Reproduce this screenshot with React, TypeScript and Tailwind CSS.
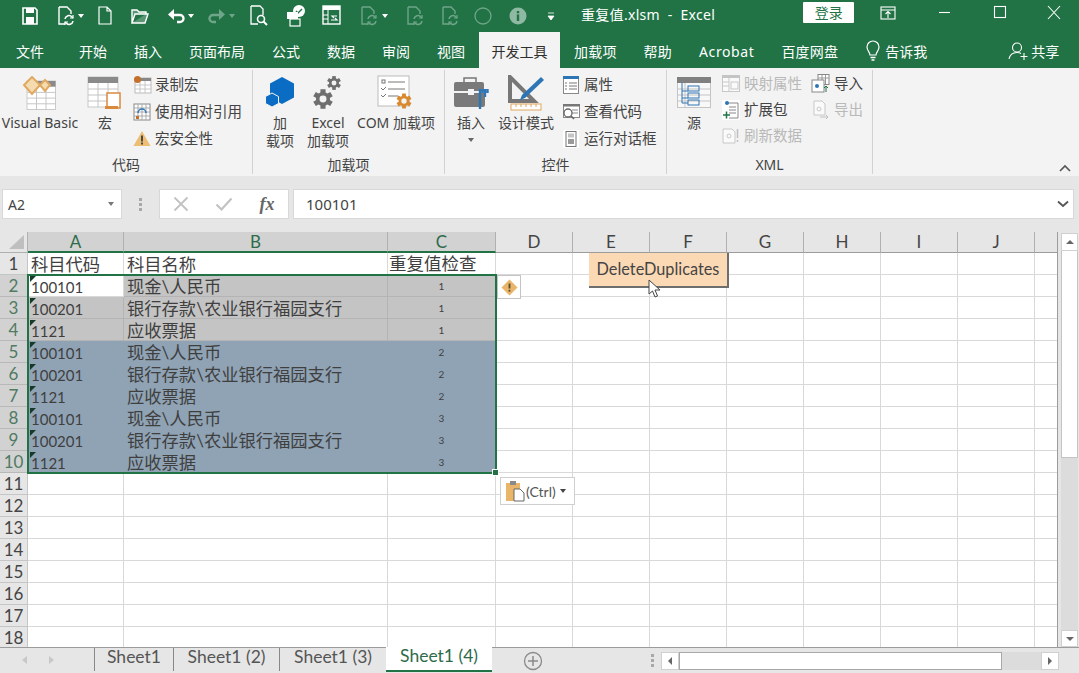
import React from "react";

const W = "#ffffff";
const Faded = "#6fa588";

function Caret({ color = W }: { color?: string }) {
  return (
    <svg width="8" height="6" viewBox="0 0 8 6" className="shrink-0">
      <path d="M1 1h6L4 5z" fill={color} />
    </svg>
  );
}

function Qat({ w, children, h = 24 }: { w: number; h?: number; children: React.ReactNode }) {
  return (
    <svg width={w} height={h} viewBox={`0 0 ${w} ${h}`} className="shrink-0" fill="none">
      {children}
    </svg>
  );
}

function Refresh({ x, y, c }: { x: number; y: number; c: string }) {
  return (
    <g transform={`translate(${x} ${y})`} stroke={c} strokeWidth="1.6" fill="none">
      <path d="M1 4a4 4 0 0 1 7-2l1 1M9 6a4 4 0 0 1-7 2L1 7" />
      <path d="M9 0v3H6M1 10V7h3" strokeWidth="1.2" />
    </g>
  );
}

function DocRefresh({ c }: { c: string }) {
  return (
    <Qat w={20}>
      <path d="M3 3h8l4 4v3M3 3v17h6" stroke={c} strokeWidth="1.4" />
      <Refresh x={8} y={11} c={c} />
    </Qat>
  );
}

function TitleBar() {
  return (
    <div className="h-[32px] flex items-center bg-[#217346] text-white relative">
      <div className="flex items-center pl-[21px] h-full">
        <Qat w={18}>
          <path d="M2 4h12l2 2v14H2z" stroke={W} strokeWidth="1.6" />
          <rect x="5" y="4" width="8" height="5" fill={W} />
          <rect x="5" y="13" width="8" height="7" fill={W} />
        </Qat>
        <div className="w-[17px]" />
        <DocRefresh c={W} />
        <div className="ml-[1px]"><Caret /></div>
        <div className="w-[12px]" />
        <Qat w={16}>
          <path d="M2 3h8l4 4v13H2zM10 3v4h4" stroke={W} strokeWidth="1.2" />
        </Qat>
        <div className="w-[17px]" />
        <Qat w={19}>
          <path d="M2 19V6h5l2 2h7v2M2 19h13l3-9H5z" stroke={W} strokeWidth="1.4" fill={W} fillOpacity="0.25" />
        </Qat>
        <div className="w-[18px]" />
        <Qat w={18}>
          <path d="M5 11h8a3.5 3.5 0 0 1 0 7h-3" stroke={W} strokeWidth="2.4" />
          <path d="M7 5v11L1 10.500z" fill={W} />
        </Qat>
        <div className="ml-[2px]"><Caret /></div>
        <div className="w-[13px]" />
        <Qat w={18}>
          <path d="M13 11H5a3.500 3.500 0 0 0 0 7h3" stroke={Faded} strokeWidth="2.4" />
          <path d="M11 5v11l6-5.500z" fill={Faded} />
        </Qat>
        <div className="ml-[2px]"><Caret color={Faded} /></div>
        <div className="w-[13px]" />
        <Qat w={20}>
          <path d="M2 2h9l3 3v6M2 2v18h7" stroke={W} strokeWidth="1.3" />
          <circle cx="12" cy="15" r="3.500" stroke={W} strokeWidth="1.6" />
          <path d="M14.500 17.500 18 21" stroke={W} strokeWidth="2" />
        </Qat>
        <div className="w-[16px]" />
        <Qat w={22}>
          <circle cx="14" cy="7" r="6" fill={W} />
          <path d="m11 7 2 2 4-4" stroke="#217346" strokeWidth="1.400" />
          <rect x="2" y="8" width="11" height="7" fill={W} />
          <rect x="5" y="15" width="10" height="7" fill="none" stroke={W} strokeWidth="1.200" />
        </Qat>
        <div className="w-[14px]" />
        <Qat w={20}>
          <rect x="2" y="2" width="17" height="18" stroke={W} strokeWidth="1.4" />
          <rect x="2" y="2" width="17" height="4" fill={W} />
          <path d="M7 6v14M2 11h5M2 15h5" stroke={W} />
          <path d="M10 16h6l-2-2M16 12h-5l2 2" stroke={W} strokeWidth="1.200" />
        </Qat>
        <div className="w-[18px]" />
        <DocRefresh c={Faded} />
        <div className="ml-[2px]"><Caret /></div>
        <div className="w-[16px]" />
        <DocRefresh c={Faded} />
        <div className="w-[15px]" />
        <DocRefresh c={Faded} />
        <div className="w-[13px]" />
        <Qat w={20}>
          <circle cx="10" cy="12" r="8" stroke={Faded} strokeWidth="1.300" />
        </Qat>
        <div className="w-[15px]" />
        <Qat w={20}>
          <circle cx="10" cy="12" r="8.500" fill="#8fb9a3" />
          <rect x="8.800" y="10.500" width="2.400" height="6.500" fill="#217346" />
          <rect x="8.800" y="7" width="2.400" height="2.300" fill="#217346" />
        </Qat>
        <div className="w-[18px]" />
        <Qat w={10}>
          <path d="M2 9h6M2 12h6l-3 4z" fill={W} stroke={W} strokeWidth="0.800" />
        </Qat>
      </div>
      <div className="ml-[25px] text-[14px] whitespace-pre tracking-[0.3px] -mt-[4px]">重复值.xlsm  -  Excel</div>
      <div className="ml-[88px] w-[51px] h-[21px] -mt-[8px] bg-white text-[#217346] text-[14px] flex items-center justify-center rounded-[1px]">
        登录
      </div>
      <div className="ml-[26px] -mt-[6px]">
        <Qat w={16}>
          <rect x="1" y="6" width="14" height="12" stroke={W} strokeWidth="1.100" />
          <path d="M1 9h14M8 17v-6M5.500 13 8 10.500l2.500 2.500" stroke={W} strokeWidth="1.100" />
        </Qat>
      </div>
      <div className="ml-[42px] -mt-[6px]">
        <Qat w={14}><path d="M1 11.500h11" stroke={W} strokeWidth="1.100" /></Qat>
      </div>
      <div className="ml-[41px] -mt-[6px]">
        <Qat w={14}><rect x="1.500" y="5.500" width="11" height="11" stroke={W} strokeWidth="1.100" /></Qat>
      </div>
      <div className="ml-[40px] -mt-[6px]">
        <Qat w={14}><path d="m1 5 12 13M13 5 1 18" stroke={W} strokeWidth="1.100" /></Qat>
      </div>
    </div>
  );
}

function TabsRow() {
  const tabs = ["开始", "插入", "页面布局", "公式", "数据", "审阅", "视图"];
  const after = ["加载项", "帮助", "Acrobat", "百度网盘"];
  return (
    <div className="h-[36px] flex items-end bg-[#217346] text-white text-[14px] pl-[16px]">
      <div className="h-[36px] flex items-center mr-[35px] pt-[2px]">文件</div>
      {tabs.map((t) => (
        <div key={t} className="h-[36px] flex items-center mr-[27px] pt-[2px]">{t}</div>
      ))}
      <div className="h-[36px] -ml-[13px] px-[11px] bg-[#f3f3f3] text-[#2f2f2f] flex items-center pt-[2px] w-[81px] whitespace-nowrap justify-center">
        开发工具
      </div>
      <div className="ml-[14px] flex">
        {after.map((t) => (
          <div
            key={t}
            className={`h-[36px] flex items-center mr-[27px] pt-[2px] ${t === "Acrobat" ? "tracking-[0.6px]" : "tracking-[0.2px]"}`}
          >
            {t}
          </div>
        ))}
      </div>
      <div className="h-[36px] flex items-center pt-[2px]">
        <svg width="16" height="22" viewBox="0 0 16 22" fill="none">
          <path d="M5 15c0-3-3-4-3-8a6 6 0 0 1 12 0c0 4-3 5-3 8z" stroke={W} strokeWidth="1.200" />
          <path d="M5.500 17.500h5M6.500 20h3" stroke={W} strokeWidth="1.400" />
        </svg>
      </div>
      <div className="h-[36px] flex items-center ml-[4px] pt-[2px]">告诉我</div>
      <div className="h-[36px] flex items-center ml-[81px] pt-[2px]">
        <svg width="22" height="20" viewBox="0 0 22 20" fill="none">
          <circle cx="9" cy="6.500" r="4.500" stroke={W} strokeWidth="1.100" />
          <path d="M1 18c1-5 4-6.500 8-6.500 1.500 0 3 .3 4 1M16 12v7M12.500 15.500h7" stroke={W} strokeWidth="1.100" />
        </svg>
      </div>
      <div className="h-[36px] flex items-center ml-[1px] pt-[2px]">共享</div>
    </div>
  );
}

function Big({ w, icon, label, caret }: { w: number; icon: React.ReactNode; label: React.ReactNode; caret?: boolean }) {
  return (
    <div style={{ width: w }} className="shrink-0 flex flex-col items-center text-[14px] leading-[18px] text-[#444]">
      <div className="h-[42px] flex items-center justify-center">{icon}</div>
      <div className="text-center whitespace-nowrap">{label}</div>
      {caret && <div className="mt-[5px]"><Caret color="#666" /></div>}
    </div>
  );
}

function Small({ icon, label, dim }: { icon: React.ReactNode; label: string; dim?: boolean }) {
  return (
    <div className={`h-[27px] flex items-center gap-[3px] text-[14.500px] whitespace-nowrap ${dim ? "text-[#b9b9b9]" : "text-[#444]"}`}>
      <div className="w-[20px] h-[20px] flex items-center justify-center shrink-0">{icon}</div>
      <span>{label}</span>
    </div>
  );
}

function Group({ w, label, children, cls }: { w: number; label: string; children: React.ReactNode; cls?: string }) {
  return (
    <div style={{ width: w }} className="shrink-0 h-[104px] mt-[2px] border-r border-[#d2d2d2] flex flex-col">
      <div className={`h-[86px] pt-[2px] flex ${cls ?? ""}`}>{children}</div>
      <div className="text-center text-[14px] text-[#444] leading-[18px]">{label}</div>
    </div>
  );
}

const Sheet = ({ s = 1 }: { s?: number }) => (
  <g transform={`scale(${s})`}>
    <rect x="0" y="0" width="30" height="30" fill="#fff" stroke="#c8c8c8" />
    <rect x="0" y="0" width="30" height="6" fill="#8a8a8a" />
    <path d="M0 12h30M0 18h30M0 24h30M10 6v24M20 6v24" stroke="#c4c4c4" />
  </g>
);

function Gear({ x, y, r, c }: { x: number; y: number; r: number; c: string }) {
  const teeth = [0, 60, 120];
  return (
    <g transform={`translate(${x} ${y})`}>
      {teeth.map((a) => (
        <rect key={a} x={-r * 0.3} y={-r * 1.15} width={r * 0.6} height={r * 2.3} fill={c} transform={`rotate(${a})`} />
      ))}
      <circle r={r * 0.62} fill="#f3f3f3" stroke={c} strokeWidth={r * 0.42} />
    </g>
  );
}

function Ribbon() {
  return (
    <div className="h-[108px] bg-[#f3f3f3] flex relative">
      <Group w={253} label="代码">
        <Big
          w={80}
          label="Visual Basic"
          icon={
            <svg width="36" height="34" viewBox="0 0 36 34">
              <g transform="translate(5 5)"><Sheet s={0.95} /></g>
              <path d="M10 1 18 9l-8 9-8-9z" fill="#f4dcb0" stroke="#e0a860" strokeWidth="2" />
              <path d="M23 4l5 5-5 6-5-6z" fill="#f4dcb0" stroke="#e0a860" strokeWidth="2" />
            </svg>
          }
        />
        <Big
          w={50}
          label="宏"
          icon={
            <svg width="36" height="36" viewBox="0 0 36 36">
              <g transform="translate(1 2)"><Sheet /></g>
              <path d="M20 18h13v15H20z" fill="#fff" stroke="#d98a3c" strokeWidth="1.500" />
              <path d="M18 31h13v3H18z" fill="#d98a3c" />
            </svg>
          }
        />
        <div className="ml-[2px] flex flex-col -mt-[1px]">
          <Small
            label="录制宏"
            icon={
              <svg width="19" height="19" viewBox="0 0 19 19">
                <rect x="2" y="3" width="16" height="15" fill="#fff" stroke="#bbb" />
                <rect x="2" y="3" width="16" height="3" fill="#888" />
                <path d="M2 10h16M2 14h16M7 6v12M12 6v12" stroke="#c8c8c8" />
                <circle cx="4.500" cy="4.500" r="3.500" fill="#c5702a" />
              </svg>
            }
          />
          <Small
            label="使用相对引用"
            icon={
              <svg width="18" height="18" viewBox="0 0 18 18">
                <rect x="1" y="1" width="16" height="16" fill="#fff" stroke="#888" />
                <path d="M1 5h16M1 9h16M1 13h16M5 1v16M9 1v16M13 1v16" stroke="#aaa" />
                <path d="M5 10a4 4 0 0 1 8 0" stroke="#2e75b6" strokeWidth="1.500" fill="none" />
                <rect x="3" y="13" width="3" height="3" fill="#c5702a" />
              </svg>
            }
          />
          <Small
            label="宏安全性"
            icon={
              <svg width="18" height="17" viewBox="0 0 18 17">
                <path d="M9 1 17.500 16H.5z" fill="#eebd74" />
                <rect x="8" y="5.500" width="2" height="6" fill="#4a4a4a" />
                <rect x="8" y="12.500" width="2" height="2" fill="#4a4a4a" />
              </svg>
            }
          />
        </div>
      </Group>
      <Group w={192} label="加载项" cls="pl-[4px]">
        <Big
          w={46}
          label={<>加<br />载项</>}
          icon={
            <svg width="32" height="34" viewBox="0 0 32 34">
              <path d="M18 1l12 6.500v14L18 28 6 21.500v-14z" fill="#0b6cc4" />
              <path d="M8 17l6.500 3.500v7L8 31l-6.500-3.500v-7z" fill="#0b6cc4" stroke="#f3f3f3" />
            </svg>
          }
        />
        <Big
          w={50}
          label={<>Excel<br />加载项</>}
          icon={
            <svg width="32" height="36" viewBox="0 0 32 36">
              <Gear x={22} y={8} r={6} c="#6f6f6f" />
              <Gear x={11} y={24} r={8.500} c="#6f6f6f" />
            </svg>
          }
        />
        <Big
          w={86}
          label="COM 加载项"
          icon={
            <svg width="38" height="36" viewBox="0 0 38 36">
              <rect x="1" y="1" width="31" height="30" fill="#fff" stroke="#bbb" />
              <path d="M11 7h17M11 14h17M11 21h10" stroke="#777" />
              <rect x="5" y="5" width="3" height="3" fill="none" stroke="#777" />
              <path d="m4 13 2 2 3-3M4 20l2 2 3-3" stroke="#777" fill="none" />
              <Gear x={27} y={26} r={6.500} c="#d98a2e" />
            </svg>
          }
        />
      </Group>
      <Group w={222} label="控件" cls="pl-[3px]">
        <Big
          w={46}
          caret
          label="插入"
          icon={
            <svg width="36" height="36" viewBox="0 0 36 36">
              <path d="M11 7V3h12v4" fill="none" stroke="#777" strokeWidth="1.500" />
              <path d="M1 9a2 2 0 0 1 2-2h26a2 2 0 0 1 2 2v7H1zM1 18h31v12a2 2 0 0 1-2 2H3a2 2 0 0 1-2-2z" fill="#7a7a7a" />
              <rect x="15" y="14" width="6" height="6" fill="#f3f3f3" />
              <path d="M27 14v20M32 14v8M34.500 14v4M29.500 14v4" stroke="#2e75b6" strokeWidth="2.400" fill="none" />
            </svg>
          }
        />
        <Big
          w={64}
          label="设计模式"
          icon={
            <svg width="36" height="36" viewBox="0 0 36 36">
              <path d="M2 2v24h24z" fill="none" stroke="#777" strokeWidth="4" />
              <path d="M33 2l3 3-19 18-5 2 2-5z" fill="#2e75b6" />
              <rect x="3" y="29" width="30" height="6" fill="#fff" stroke="#e0a860" />
              <path d="M8 29v3M13 29v3M18 29v3M23 29v3M28 29v3" stroke="#e0a860" />
            </svg>
          }
        />
        <div className="ml-[3px] flex flex-col -mt-[1px]">
          <Small
            label="属性"
            icon={
              <svg width="16" height="18" viewBox="0 0 16 18">
                <rect x=".5" y=".5" width="15" height="17" fill="#fff" stroke="#888" />
                <rect x="0" y="0" width="16" height="3" fill="#2e75b6" />
                <path d="M2 7h2M6 7h8M2 10h2M6 10h8M2 13h2M6 13h8" stroke="#777" />
              </svg>
            }
          />
          <Small
            label="查看代码"
            icon={
              <svg width="19" height="18" viewBox="0 0 19 18">
                <rect x="1.500" y="1.500" width="16" height="13" fill="#fff" stroke="#888" />
                <rect x="1" y="1" width="17" height="2.500" fill="#777" />
                <path d="M10 7h6M10 10h6" stroke="#888" />
                <circle cx="6" cy="10" r="4" fill="#fff" stroke="#666" strokeWidth="1.300" />
                <path d="m9 13 3 3" stroke="#666" strokeWidth="1.600" />
              </svg>
            }
          />
          <Small
            label="运行对话框"
            icon={
              <svg width="16" height="18" viewBox="0 0 16 18">
                <rect x="0" y="0" width="16" height="18" fill="#fff" />
                <rect x="3" y="1.500" width="10" height="15" fill="#fff" stroke="#777" />
                <rect x="5" y="3.500" width="6" height="4" fill="#c4c4c4" />
                <rect x="5" y="9" width="6" height="5" fill="#9a9a9a" />
              </svg>
            }
          />
        </div>
      </Group>
      <Group w={206} label="XML" cls="pl-[2px]">
        <Big
          w={50}
          label="源"
          icon={
            <svg width="34" height="32" viewBox="0 0 34 32">
              <rect x=".5" y=".5" width="33" height="30" fill="#f8f8f8" stroke="#c4c4c4" />
              <rect x="0" y="0" width="34" height="6" fill="#808080" />
              <path d="M0 12h34M0 18h34M0 24h34M8 6v24" stroke="#c4c4c4" />
              <path d="M5 6v20h6M5 14h6M5 21h6" stroke="#2e75b6" fill="none" />
              <rect x="11" y="9" width="11" height="5" fill="none" stroke="#2e75b6" />
              <rect x="11" y="16" width="11" height="5" fill="none" stroke="#2e75b6" />
              <rect x="11" y="23" width="11" height="5" fill="none" stroke="#2e75b6" />
            </svg>
          }
        />
        <div className="ml-[2px] w-[90px] flex flex-col -mt-[2px]">
          <Small
            dim
            label="映射属性"
            icon={
              <svg width="18" height="17" viewBox="0 0 18 17">
                <rect x=".5" y=".5" width="17" height="16" fill="#fafafa" stroke="#c8c8c8" />
                <rect x="0" y="0" width="18" height="3" fill="#c4c4c4" />
                <path d="M0 7h7M0 11h7M7 3v14" stroke="#c8c8c8" />
                <rect x="9" y="7" width="7" height="7" fill="none" stroke="#c8c8c8" />
              </svg>
            }
          />
          <div className="-mt-[1px]">
            <Small
              label="扩展包"
              icon={
                <svg width="18" height="20" viewBox="0 0 18 20">
                  <rect x="0" y="0" width="18" height="20" fill="#fff" />
                  <path d="M4 3h12v15H7" fill="none" stroke="#888" />
                  <path d="M7 7h7M7 10h7M7 13h7" stroke="#888" />
                  <circle cx="5" cy="3" r="2" fill="#2e75b6" />
                  <path d="M1 15h7M4.500 11.500v7" stroke="#217346" strokeWidth="1.500" />
                </svg>
              }
            />
          </div>
          <div className="-mt-[1px]">
            <Small
              dim
              label="刷新数据"
              icon={
                <svg width="18" height="19" viewBox="0 0 18 19">
                  <path d="M1 3h9l3 3v11H1z" fill="#fafafa" stroke="#c8c8c8" />
                  <circle cx="7" cy="10" r="2" fill="none" stroke="#c8c8c8" />
                  <path d="M15.500 3v9M15.500 14v2" stroke="#c0c0c0" strokeWidth="1.500" />
                </svg>
              }
            />
          </div>
        </div>
        <div className="flex flex-col -mt-[2px]">
          <Small
            label="导入"
            icon={
              <svg width="20" height="20" viewBox="0 0 20 20">
                <rect x="7" y="0.500" width="11" height="10" fill="#fff" stroke="#888" />
                <path d="M7 4h11M11 1v9M14.500 1v9" stroke="#999" />
                <rect x="1" y="6" width="12" height="12" fill="#fff" stroke="#888" />
                <circle cx="6" cy="12" r="2" fill="#2e75b6" />
                <path d="M15 18v-6l-2 2M15 12l2 2" stroke="#217346" fill="none" />
              </svg>
            }
          />
          <div className="-mt-[1px]">
            <Small
              dim
              label="导出"
              icon={
                <svg width="18" height="20" viewBox="0 0 18 20">
                  <path d="M2 1h8l3 3v11H2z" fill="#fafafa" stroke="#c8c8c8" />
                  <circle cx="7" cy="9" r="2" fill="none" stroke="#c8c8c8" />
                  <path d="M8 17h8l-2-2M16 17l-2 2" stroke="#c0c0c0" fill="none" />
                </svg>
              }
            />
          </div>
        </div>
      </Group>
      <div className="absolute right-[8px] bottom-[4px]">
        <svg width="12" height="8" viewBox="0 0 12 8" fill="none">
          <path d="m1 7 5-5 5 5" stroke="#555" strokeWidth="1.600" />
        </svg>
      </div>
    </div>
  );
}

function FormulaBar() {
  return (
    <div className="h-[56px] bg-[#e6e6e6] pt-[13px] flex items-start text-[14px] text-[#444]">
      <div className="ml-[2px] w-[120px] h-[30px] bg-white border border-[#d8d8d8] flex items-center justify-between pl-[5px] pr-[6px]">
        <span>A2</span>
        <Caret color="#777" />
      </div>
      <div className="w-[37px] h-[30px] flex flex-col items-center justify-center gap-[2px]">
        <div className="w-[3px] h-[3px] bg-[#a8a8a8]" />
        <div className="w-[3px] h-[3px] bg-[#a8a8a8]" />
        <div className="w-[3px] h-[3px] bg-[#a8a8a8]" />
      </div>
      <div className="w-[130px] h-[30px] bg-white border border-[#d8d8d8] flex items-center">
        <div className="w-[42px] flex justify-center">
          <svg width="16" height="16" viewBox="0 0 16 16" fill="none">
            <path d="m1.500 1.500 13 13M14.500 1.500l-13 13" stroke="#c2c2c2" strokeWidth="1.800" />
          </svg>
        </div>
        <div className="w-[44px] flex justify-center">
          <svg width="18" height="16" viewBox="0 0 18 16" fill="none">
            <path d="m1.500 8.500 5 5 10-11" stroke="#c2c2c2" strokeWidth="2.200" />
          </svg>
        </div>
        <div className="w-[42px] text-center font-['Liberation_Serif',serif] italic font-bold text-[18px] text-[#666]">fx</div>
      </div>
      <div className="ml-[4px] w-[781px] h-[30px] bg-white border border-[#d8d8d8] flex items-center justify-between pl-[12px] pr-[4px]">
        <span className="text-[15px]">100101</span>
        <svg width="12" height="8" viewBox="0 0 12 8" fill="none">
          <path d="m1 1.500 5 4.500 5-4.500" stroke="#555" strokeWidth="1.800" />
        </svg>
      </div>
    </div>
  );
}

const COLS = ["A", "B", "C", "D", "E", "F", "G", "H", "I", "J", ""];
const NAMES = ["现金\\人民币", "银行存款\\农业银行福园支行", "应收票据"];
const CODES = ["100101", "100201", "1121"];

function Grid() {
  const rows = Array.from({ length: 18 }, (_, i) => i + 1);
  return (
    <div className="w-[1058px] h-[415px] overflow-hidden grid grid-cols-[28px_96px_264px_108px_77px_77px_77px_77px_77px_77px_77px_22px] grid-rows-[21px] auto-rows-[22px] font-['Lato','Noto_Sans_CJK_SC',sans-serif] text-[#3f3f3f] border-r border-[#9c9c9c] bg-white">
      <div className="bg-[#e6e6e6] border-r border-b border-[#b0b0b0] relative">
        <div className="absolute right-[3px] bottom-[3px] w-[15px] h-[14px] bg-[#bfbfbf] [clip-path:polygon(100%_0,100%_100%,0_100%)]" />
      </div>
      {COLS.map((c, i) => (
        <div
          key={c + i}
          className={
            i < 3
              ? "bg-[#d2d2d2] border-r border-[#b0b0b0] border-b-2 border-b-[#217346] flex items-center justify-center text-[17px] text-[#2d6b4a]"
              : i < 10
                ? "bg-[#e6e6e6] border-r border-[#b0b0b0] border-b border-b-[#9c9c9c] flex items-center justify-center text-[17px] text-[#444]"
                : "bg-[#e6e6e6] border-b border-b-[#9c9c9c]"
          }
        >
          {c}
        </div>
      ))}
      {rows.map((r) => {
        const sel = r >= 2 && r <= 10;
        const blue = r >= 5 && r <= 10;
        const gray = r >= 2 && r <= 4;
        const idx = (r - 2) % 3;
        const fill = blue
          ? "bg-[#8fa3b5] border-[#8fa3b5]"
          : gray
            ? "bg-[#c4c4c4] border-[#b4b4b4]"
            : "bg-white border-[#d9d9d9]";
        return (
          <React.Fragment key={r}>
            <div
              className={
                sel
                  ? "bg-[#d2d2d2] border-r border-b border-[#b8b8b8] flex items-center justify-center text-[17px] text-[#4f7a63]"
                  : "bg-[#e6e6e6] border-r border-b border-[#c6c6c6] flex items-center justify-center text-[17px] text-[#444]"
              }
            >
              {r}
            </div>
            <div className={`relative border-r border-b pl-[3px] flex items-center overflow-hidden ${r === 2 ? "bg-white border-[#d9d9d9]" : fill}`}>
              {sel && <div className="absolute left-[2px] top-[1px] w-[6px] h-[6px] bg-[#17392a] [clip-path:polygon(0_0,100%_0,0_100%)]" />}
              {r === 1 ? (
                <span className="text-[17.300px] mt-[2px]">科目代码</span>
              ) : (
                sel && <span className="text-[15px] mt-[4px]">{CODES[idx]}</span>
              )}
            </div>
            <div className={`border-r border-b pl-[3px] flex items-center overflow-hidden whitespace-nowrap ${fill}`}>
              {r === 1 ? (
                <span className="text-[17.300px] mt-[2px]">科目名称</span>
              ) : (
                sel && <span className="text-[17.300px] mt-[2px]">{NAMES[idx]}</span>
              )}
            </div>
            <div className={`border-r border-b flex items-center overflow-hidden whitespace-nowrap ${fill} ${r === 1 ? "pl-[1px]" : "justify-center"}`}>
              {r === 1 ? (
                <span className="text-[17.500px] mt-[2px]">重复值检查</span>
              ) : (
                sel && <span className="text-[10px] mt-[1px]">{r <= 4 ? 1 : r <= 7 ? 2 : 3}</span>
              )}
            </div>
            {COLS.slice(3).map((c, i) => (
              <div key={c + i} className={i < 7 ? "border-r border-b border-[#d9d9d9]" : "border-b border-[#d9d9d9]"} />
            ))}
          </React.Fragment>
        );
      })}
    </div>
  );
}

function VScroll() {
  return (
    <div className="flex-1 bg-[#e6e6e6] flex flex-col items-center pt-[1px] pl-[3px] pr-[1px]">
      <div className="w-full h-[18px] bg-white border border-[#d0d0d0] flex items-center justify-center">
        <svg width="10" height="6" viewBox="0 0 10 6"><path d="M1 5h8L5 1z" fill="#666" /></svg>
      </div>
      <div className="w-full h-[207px] bg-white border-x border-b border-[#c4c4c4]" />
      <div className="w-full flex-1 bg-[#dcdcdc]" />
      <div className="w-full h-[17px] bg-white border border-[#d0d0d0] flex items-center justify-center">
        <svg width="10" height="6" viewBox="0 0 10 6"><path d="M1 1h8L5 5z" fill="#666" /></svg>
      </div>
    </div>
  );
}

function Overlays() {
  return (
    <>
      <div className="absolute left-[27px] top-[42px] w-[470px] h-[200px] border-2 border-[#217346] pointer-events-none">
        <div className="absolute -right-[4px] -bottom-[4px] w-[7px] h-[7px] bg-[#217346] border border-white" />
      </div>
      <div className="absolute left-[497px] top-[43px] w-[24px] h-[24px] bg-white border border-[#c4c4c4] flex items-center justify-center">
        <svg width="17" height="17" viewBox="0 0 17 17">
          <path d="M8.500 .5 16.500 8.500 8.500 16.500.5 8.500z" fill="#e8b56a" />
          <rect x="7.600" y="4.500" width="1.800" height="5" fill="#5a4a2a" />
          <rect x="7.600" y="10.800" width="1.800" height="1.800" fill="#5a4a2a" />
        </svg>
      </div>
      <div className="absolute left-[589px] top-[21px] w-[140px] h-[35px] bg-[#fcd9b5] border-r-2 border-b-2 border-[#6e6e6e] flex items-center justify-center text-[16.300px] text-[#444] font-['Lato',sans-serif]">
        DeleteDuplicates
      </div>
      <div className="absolute left-[648px] top-[47px]">
        <svg width="14" height="19" viewBox="0 0 14 19">
          <path d="M1 1v14l3.500-3 2.500 6 2.500-1-2.500-6h5z" fill="#fff" stroke="#444" strokeWidth="1" />
        </svg>
      </div>
      <div className="absolute left-[500px] top-[245px] w-[75px] h-[28px] bg-white border border-[#cfcfcf] flex items-center pl-[4px] text-[14px] text-[#555] font-['Lato',sans-serif]">
        <svg width="20" height="22" viewBox="0 0 20 22" className="shrink-0">
          <rect x="1" y="3" width="14" height="18" fill="#e8b56a" />
          <rect x="5" y="1" width="6" height="4" fill="#8a8a8a" />
          <path d="M9 9h6l4 4v8H9z" fill="#fff" stroke="#666" />
        </svg>
        <span className="ml-[1px]">(Ctrl)</span>
        <span className="ml-[3px]"><Caret color="#444" /></span>
      </div>
    </>
  );
}

function SheetTabs() {
  const tab = "h-[23px] pb-[5px] flex items-center justify-center text-[17.500px] text-[#555]";
  return (
    <div className="h-[26px] bg-[#e6e6e6] border-t border-[#9c9c9c] flex items-start relative font-['Lato',sans-serif]">
      <div className="w-[94px] h-[24px] flex items-center pl-[21px] gap-[20px]">
        <svg width="7" height="10" viewBox="0 0 7 10"><path d="M6 1v8L1 5z" fill="#c8c8c8" /></svg>
        <svg width="7" height="10" viewBox="0 0 7 10"><path d="M1 1v8l5-4z" fill="#c8c8c8" /></svg>
      </div>
      <div className={`w-[79px] border-l border-[#888] ${tab}`}>Sheet1</div>
      <div className={`w-[106px] border-l border-[#888] ${tab}`}>Sheet1 (2)</div>
      <div className={`w-[107px] border-l border-[#888] ${tab}`}>Sheet1 (3)</div>
      <div className="w-[106px] h-[25px] -mt-[1px] pb-[4px] bg-white border-b-2 border-[#217346] flex items-center justify-center text-[17.500px] text-[#2d6b4a]">
        Sheet1 (4)
      </div>
      <div className="ml-[31px] mt-[3px]">
        <svg width="20" height="20" viewBox="0 0 20 20" fill="none">
          <circle cx="10" cy="10" r="8.500" stroke="#8a8a8a" strokeWidth="1.300" />
          <path d="M10 5v10M5 10h10" stroke="#8a8a8a" strokeWidth="1.500" />
        </svg>
      </div>
      <div className="ml-[102px] h-[24px] w-[14px] flex flex-col items-center justify-center gap-[2px]">
        <div className="w-[3px] h-[3px] bg-[#a8a8a8]" />
        <div className="w-[3px] h-[3px] bg-[#a8a8a8]" />
        <div className="w-[3px] h-[3px] bg-[#a8a8a8]" />
      </div>
      <div className="ml-[2px] mt-[4px] h-[18px] flex w-[398px]">
        <div className="w-[18px] bg-white border border-[#d0d0d0] flex items-center justify-center">
          <svg width="6" height="10" viewBox="0 0 6 10"><path d="M5 1v8L1 5z" fill="#666" /></svg>
        </div>
        <div className="w-[323px] bg-white border border-[#a8a8a8]" />
        <div className="flex-1 bg-[#dcdcdc]" />
        <div className="w-[18px] bg-white border border-[#d0d0d0] flex items-center justify-center">
          <svg width="6" height="10" viewBox="0 0 6 10"><path d="M1 1v8l4-4z" fill="#666" /></svg>
        </div>
      </div>
    </div>
  );
}

export default function App() {
  return (
    <div className="w-[1079px] h-[673px] overflow-hidden flex flex-col font-['Noto_Sans','Noto_Sans_CJK_SC',sans-serif] bg-[#e6e6e6]">
      <TitleBar />
      <TabsRow />
      <Ribbon />
      <FormulaBar />
      <div className="h-[415px] flex relative">
        <Grid />
        <VScroll />
        <Overlays />
      </div>
      <SheetTabs />
    </div>
  );
}
